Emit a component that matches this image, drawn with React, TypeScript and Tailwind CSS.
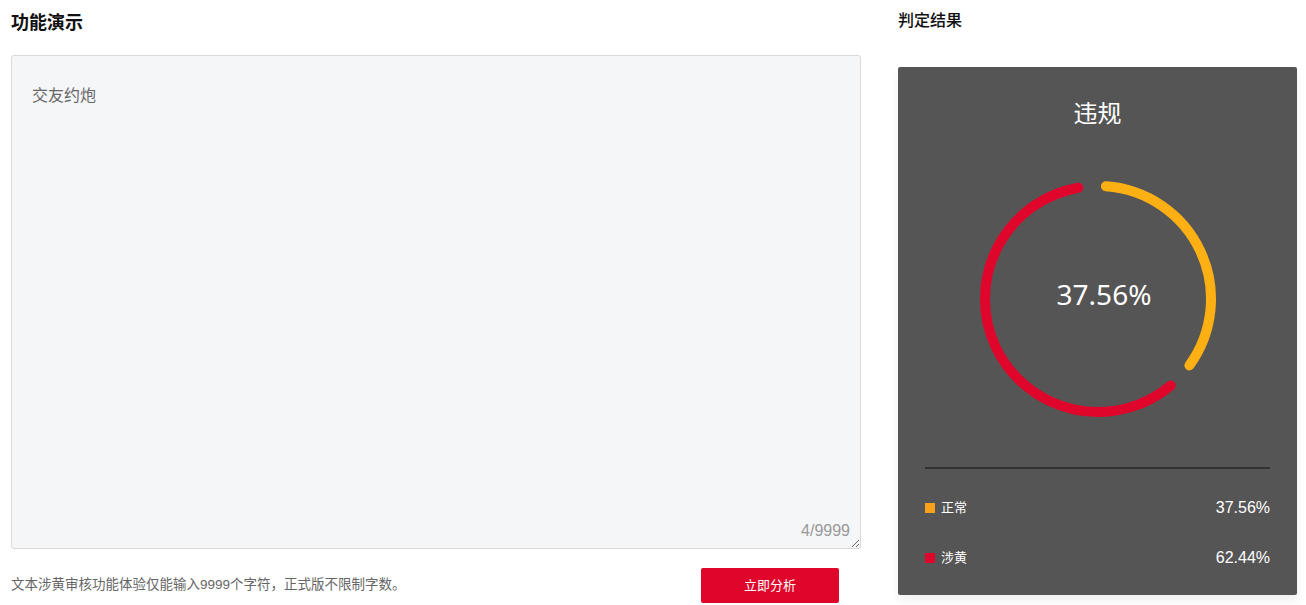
import React from "react";

const R = 113;
const CX = 120;
const CY = 120;

function pt(deg: number) {
  const a = ((deg - 90) * Math.PI) / 180;
  return [CX + R * Math.cos(a), CY + R * Math.sin(a)];
}

function arc(from: number, to: number) {
  const [x1, y1] = pt(from);
  const [x2, y2] = pt(to);
  const large = to - from > 180 ? 1 : 0;
  return `M ${x1} ${y1} A ${R} ${R} 0 ${large} 1 ${x2} ${y2}`;
}

function Donut() {
  return (
    <svg width="240" height="240" viewBox="0 0 240 240" className="block">
      <path d={arc(4, 126)} fill="none" stroke="#fdb013" strokeWidth="10" strokeLinecap="round" />
      <path d={arc(140, 350)} fill="none" stroke="#e0062b" strokeWidth="10" strokeLinecap="round" />
      <text
        x="126"
        y="126"
        textAnchor="middle"
        fill="#ffffff"
        fontSize="28"
        style={{ fontFamily: '"Noto Sans", "Noto Sans CJK SC", sans-serif' }}
      >
        37.56%
      </text>
    </svg>
  );
}

export default function App() {
  return (
    <div
      className="flex h-[605px] w-[1306px] bg-white pl-[11px] text-[#333]"
      style={{ fontFamily: '"Liberation Sans", "Noto Sans CJK SC", sans-serif' }}
    >
      <div className="w-[850px] shrink-0">
        <h2 className="pt-[12px] text-[18px] leading-[22px] font-bold text-[#111]">功能演示</h2>
        <div className="relative mt-[21px] h-[494px] rounded-[3px] border border-[#d9d9d9] bg-[#f5f6f8]">
          <textarea
            defaultValue="交友约炮"
            className="block h-full w-full resize-y bg-transparent px-5 pt-[29px] text-[16px] leading-[22px] text-[#666] outline-none"
          />
          <span className="absolute right-[10px] bottom-[7px] text-[16px] leading-5 text-[#999]">4/9999</span>
        </div>
        <div className="mt-[19px] flex items-center justify-between pr-[22px]">
          <p className="text-[13.5px] text-[#666]">文本涉黄审核功能体验仅能输入9999个字符，正式版不限制字数。</p>
          <button className="h-[35px] w-[138px] rounded-[2px] bg-[#e0062b] text-[13px] text-white">立即分析</button>
        </div>
      </div>

      <div className="ml-[37px] w-[399px] shrink-0">
        <h2 className="pt-[11px] text-[16px] leading-5 font-medium text-[#111]">判定结果</h2>
        <div className="mt-[36px] flex h-[528px] flex-col items-center rounded-[2px] bg-[#555555] pt-[31px] shadow-[0_6px_10px_rgba(0,0,0,0.06)]">
          <div className="text-[24px] leading-8 text-white">违规</div>
          <div className="mt-[49px]">
            <Donut />
          </div>
          <div className="mt-[48px] h-[2px] w-[345px] bg-[#333333]" />
          <div className="mt-[29px] flex w-[345px] flex-col gap-[30px]">
            <div className="flex h-5 items-center justify-between">
              <div className="flex items-center gap-[6px]">
                <span className="h-[10px] w-[10px] bg-[#f9a11b]" />
                <span className="text-[13px] text-white">正常</span>
              </div>
              <span className="text-[16px] text-white">37.56%</span>
            </div>
            <div className="flex h-5 items-center justify-between">
              <div className="flex items-center gap-[6px]">
                <span className="h-[10px] w-[10px] bg-[#e0062b]" />
                <span className="text-[13px] text-white">涉黄</span>
              </div>
              <span className="text-[16px] text-white">62.44%</span>
            </div>
          </div>
        </div>
      </div>
    </div>
  );
}
